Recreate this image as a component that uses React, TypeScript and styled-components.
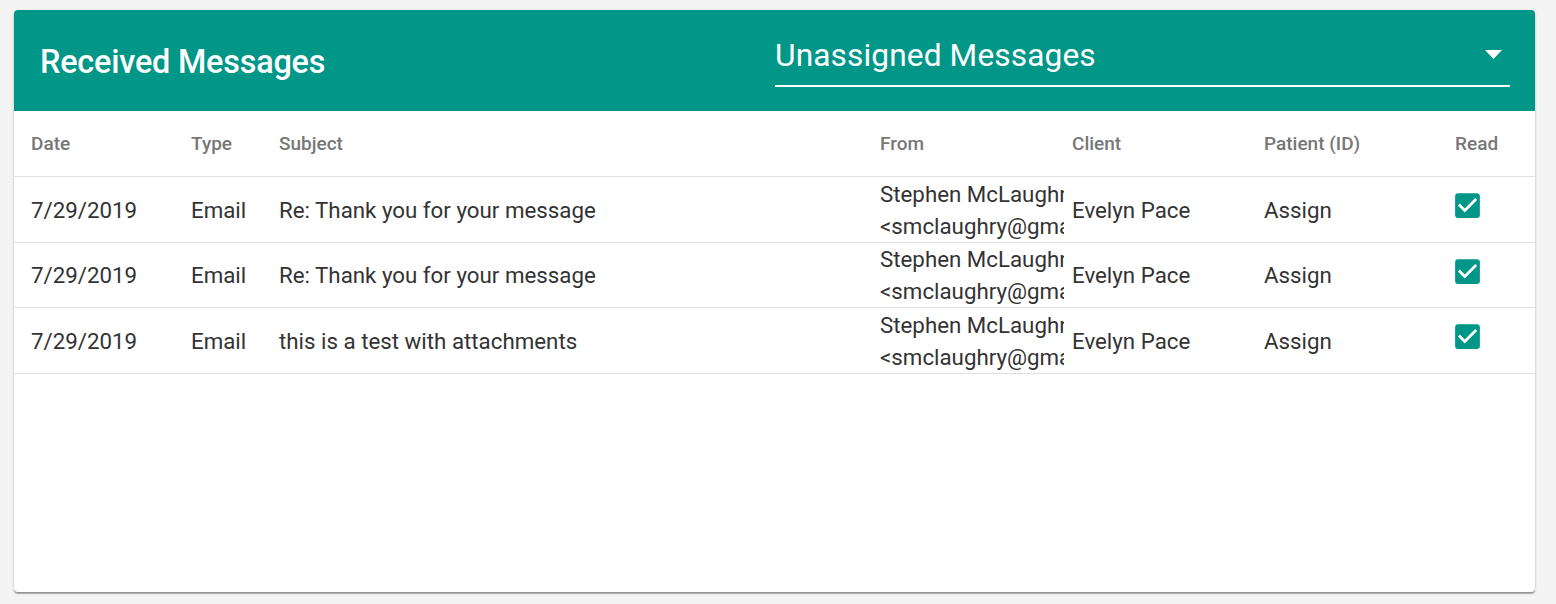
import React from "react";
import styled, { createGlobalStyle } from "styled-components";

const Global = createGlobalStyle`
  html, body { margin: 0; padding: 0; background: #f4f4f4; }
  body { font-family: Roboto, "Noto Sans", Arial, sans-serif; }
  * { box-sizing: border-box; }
`;

const Page = styled.div`
  padding: 10px 21px 12px 14px;
`;

const Card = styled.div`
  background: #fff;
  border-radius: 4px;
  overflow: hidden;
  height: 582px;
  box-shadow: 0 1px 3px rgba(0,0,0,0.2), 0 2px 1px rgba(0,0,0,0.22), 0 2px 1px -1px rgba(0,0,0,0.12);
`;

const Header = styled.div`
  background: #009688;
  height: 101px;
  display: flex;
  align-items: center;
  justify-content: space-between;
  padding: 0 25px 0 26px;
`;

const Title = styled.h2`
  margin: 0;
  color: #fff;
  font-size: 32.4px;
  font-weight: 500;
  letter-spacing: -0.2px;
  padding-top: 2px;
`;

const Select = styled.div`
  width: 735px;
  height: 68px;
  border-bottom: 2px solid #fff;
  display: flex;
  align-items: center;
  justify-content: space-between;
  padding: 6px 8px 0 0;
  color: #fff;
  align-self: flex-start;
  margin-top: 9px;
`;

const SelectValue = styled.span`
  font-size: 31.7px;
  font-weight: 400;
  letter-spacing: 0.1px;
`;

const Row = styled.div<{ $head?: boolean; $h: number }>`
  display: grid;
  grid-template-columns: 160px 88px 601px 201px 183px 191px 97px;
  height: ${(p) => p.$h}px;
  border-bottom: 1px solid #e0e0e0;
  align-items: center;
  color: ${(p) => (p.$head ? "#777" : "#333")};
  font-size: ${(p) => (p.$head ? "19px" : "22.3px")};
  font-weight: ${(p) => (p.$head ? 500 : 400)};
`;

const Cell = styled.div<{ $pad?: number }>`
  padding-left: ${(p) => p.$pad ?? 17}px;
  white-space: nowrap;
  overflow: hidden;
`;

const FromBox = styled.div`
  overflow: hidden;
  line-height: 32px;
  white-space: nowrap;
`;

const CheckIcon = styled.svg`
  display: block;
  margin-left: -4px;
  margin-top: -8px;
`;

const Check = () => (
  <CheckIcon width="33" height="33" viewBox="0 0 24 24">
    <path
      fill="#009688"
      d="M19 3H5c-1.11 0-2 .9-2 2v14c0 1.1.89 2 2 2h14c1.11 0 2-.9 2-2V5c0-1.1-.89-2-2-2zm-9 14l-5-5 1.41-1.41L10 14.17l7.59-7.59L19 8l-9 9z"
    />
  </CheckIcon>
);

const rows = [
  { subject: "Re: Thank you for your message", h: 66 },
  { subject: "Re: Thank you for your message", h: 65 },
  { subject: "this is a test with attachments", h: 66 },
];

export default function App() {
  return (
    <>
      <Global />
      <Page>
        <Card>
          <Header>
            <Title>Received Messages</Title>
            <Select>
              <SelectValue>Unassigned Messages</SelectValue>
              <svg width="17" height="10" viewBox="0 0 17 10">
                <path d="M0 0 L17 0 L8.5 9 Z" fill="#fff" />
              </svg>
            </Select>
          </Header>
          <Row $head $h={66}>
            <Cell>Date</Cell>
            <Cell>Type</Cell>
            <Cell>Subject</Cell>
            <Cell>From</Cell>
            <Cell $pad={8}>Client</Cell>
            <Cell>Patient (ID)</Cell>
            <Cell>Read</Cell>
          </Row>
          {rows.map((r, i) => (
            <Row key={i} $h={r.h}>
              <Cell>7/29/2019</Cell>
              <Cell>Email</Cell>
              <Cell>{r.subject}</Cell>
              <Cell>
                <FromBox>
                  Stephen McLaughry
                  <br />
                  &lt;smclaughry@gmail.com&gt;
                </FromBox>
              </Cell>
              <Cell $pad={8}>Evelyn Pace</Cell>
              <Cell>Assign</Cell>
              <Cell style={{ overflow: "visible" }}>
                <Check />
              </Cell>
            </Row>
          ))}
        </Card>
      </Page>
    </>
  );
}
